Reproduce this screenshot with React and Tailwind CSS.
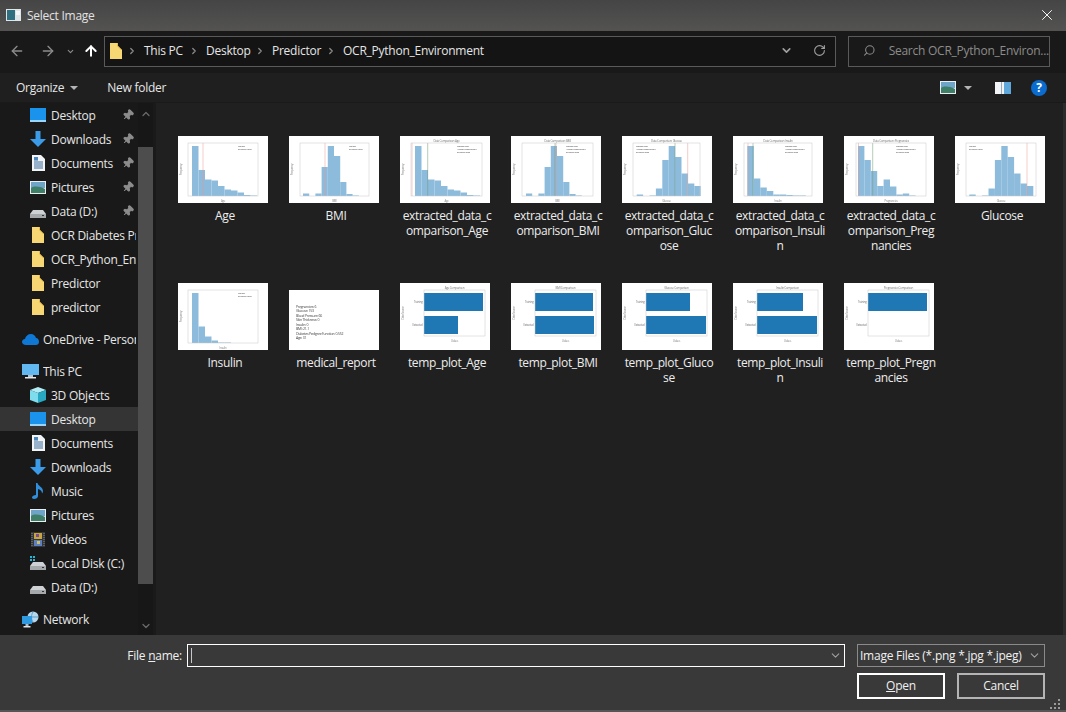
import React from 'react';
import { ArrowLeft, ArrowRight, ArrowUp, ChevronDown, ChevronRight, ChevronUp, RotateCw, Search, Pin, X } from 'lucide-react';

const FolderIcon = ({ className = '' }) => (
  <svg width="14" height="18" viewBox="0 0 14 18" className={className}>
    <path d="M1 1h7l1 2 0 0v1l4 4v9H1z" fill="#f7d774" />
    <path d="M8 1l1 0v3l4 4h-1L8 4z" fill="#e8b93f" />
  </svg>
);

const DesktopIcon = () => (
  <svg width="16" height="14" viewBox="0 0 16 14">
    <rect x="0" y="0" width="16" height="12" fill="#1a93ec" />
    <rect x="0" y="12" width="16" height="2" fill="#9bd3fa" />
  </svg>
);

const DownloadIcon = () => (
  <svg width="16" height="16" viewBox="0 0 16 16">
    <path d="M5.5 0h5v8H16l-8 8-8-8h5.500z" fill="#3b9be8" />
  </svg>
);

const DocumentIcon = () => (
  <svg width="13" height="16" viewBox="0 0 13 16">
    <path d="M0 0h9l4 4v12H0z" fill="#f2f4f6" />
    <path d="M2 5h4M2 7h9M2 9h9M2 11h9M2 13h9" stroke="#3f6fa0" strokeWidth="1" />
    <rect x="2" y="2" width="4" height="3" fill="#4a86c0" />
  </svg>
);

const PicturesIcon = () => (
  <svg width="16" height="13" viewBox="0 0 16 13">
    <rect width="16" height="13" fill="#e8eef2" />
    <rect x="1" y="1" width="14" height="6" fill="#6ea4c8" />
    <path d="M1 7c3-2 8-2 14 1v4H1z" fill="#3f7f68" />
  </svg>
);

const DriveIcon = ({ dots = false }) => (
  <svg width="16" height="14" viewBox="0 0 16 14">
    {dots && <path d="M0 0h2v2H0zM3 0h2v2H3zM0 3h2v2H0zM3 3h2v2H3z" fill="#29b4d6" />}
    <path d="M3 6h10l3 4H0z" fill="#cfd2d4" />
    <rect y="10" width="16" height="4" fill="#a6a9ab" />
    <rect x="12" y="11" width="2" height="1" fill="#333" />
  </svg>
);

const CloudIcon = () => (
  <svg width="17" height="11" viewBox="0 0 17 11">
    <path d="M4 11C1.500 11 0 9.500 0 8s1-3 3-3c.5-3 3-5 6-5 2.500 0 4.500 2 5 4 2 0 3 2 3 4s-1.500 3-3 3z" fill="#0f78d4" />
  </svg>
);

const MonitorIcon = () => (
  <svg width="17" height="15" viewBox="0 0 17 15">
    <rect width="17" height="11" fill="#62b8f0" />
    <rect x="6" y="11" width="5" height="2" fill="#b8c4cc" />
    <rect x="3" y="13" width="11" height="1.500" fill="#e4e8ea" />
  </svg>
);

const CubeIcon = () => (
  <svg width="16" height="16" viewBox="0 0 16 16">
    <path d="M8 0l8 3-8 3-8-3z" fill="#b4ecf5" />
    <path d="M0 3l8 3v10l-8-3z" fill="#7fdcec" />
    <path d="M16 3l-8 3v10l8-3z" fill="#29a8c4" />
  </svg>
);

const MusicIcon = () => (
  <svg width="12" height="16" viewBox="0 0 12 16">
    <path d="M4 0h1.500c.5 3 5.500 4 5.500 8 0 1-.5 2-1 2.500.2-2.500-2-4-4-4.500V13c0 2-2 3-4 3-1.500 0-2-1-2-1.500C0 13 2 12 4 12z" fill="#2f8fdc" />
  </svg>
);

const VideoIcon = () => (
  <svg width="14" height="15" viewBox="0 0 14 15">
    <rect width="14" height="15" fill="#33363a" />
    <rect x="3" y="1" width="8" height="6" fill="#c9a63c" />
    <rect x="3" y="8" width="8" height="6" fill="#5d7fc0" />
    <path d="M5 2h3v3H5z" fill="#7a4a9e" />
    <path d="M6 9h3v3H6z" fill="#d0c060" />
    <path d="M1 1v13M13 1v13" stroke="#888" strokeWidth="1" strokeDasharray="1 1" />
  </svg>
);

const NetworkIcon = () => (
  <svg width="17" height="17" viewBox="0 0 17 17">
    <circle cx="11" cy="6" r="5.500" fill="#b6d8ef" />
    <path d="M6 6h10M11 1c-2 3-2 7 0 10" stroke="#5a9bc8" strokeWidth="1" fill="none" />
    <rect x="0" y="5" width="10" height="8" fill="#2f9ae0" />
    <rect x="3.500" y="13" width="3" height="2" fill="#a8c0d0" />
    <rect x="1.500" y="15" width="7" height="1.500" fill="#e0e6ea" />
  </svg>
);

const pinned = [
  { label: 'Desktop', icon: <DesktopIcon />, pin: true },
  { label: 'Downloads', icon: <DownloadIcon />, pin: true },
  { label: 'Documents', icon: <DocumentIcon />, pin: true },
  { label: 'Pictures', icon: <PicturesIcon />, pin: true },
  { label: 'Data (D:)', icon: <DriveIcon />, pin: true },
  { label: 'OCR Diabetes Prediction', icon: <FolderIcon /> },
  { label: 'OCR_Python_Environment', icon: <FolderIcon /> },
  { label: 'Predictor', icon: <FolderIcon /> },
  { label: 'predictor', icon: <FolderIcon /> },
];

const thisPc = [
  { label: '3D Objects', icon: <CubeIcon /> },
  { label: 'Desktop', icon: <DesktopIcon />, active: true },
  { label: 'Documents', icon: <DocumentIcon /> },
  { label: 'Downloads', icon: <DownloadIcon /> },
  { label: 'Music', icon: <MusicIcon /> },
  { label: 'Pictures', icon: <PicturesIcon /> },
  { label: 'Videos', icon: <VideoIcon /> },
  { label: 'Local Disk (C:)', icon: <DriveIcon dots /> },
  { label: 'Data (D:)', icon: <DriveIcon /> },
];

const NavRow = ({ item }) => (
  <div className={`relative flex h-6 items-center pl-[30px] ${item.active ? 'bg-[#343434]' : ''}`}>
    <span className="flex w-[21px] shrink-0 justify-center pr-[5px]">{item.icon}</span>
    <span className="w-[85px] overflow-hidden whitespace-nowrap text-[#e6e6e6]">{item.label}</span>
    {item.pin && (
      <Pin size={12} className="absolute left-[122px] top-[6px] rotate-45 fill-[#8c8c8c] text-[#8c8c8c]" />
    )}
  </div>
);

const TopRow = ({ icon, label, className = '' }) => (
  <div className={`flex h-6 items-center pl-[22px] ${className}`}>
    <span className="flex w-[21px] shrink-0 justify-center pr-[4px]">{icon}</span>
    <span className="w-[93px] overflow-hidden whitespace-nowrap text-[#e6e6e6]">{label}</span>
  </div>
);

// axes frame, ticks and small captions shared by both kinds of plot
const Frame = ({ x0, x1, top, bottom, title, xlabel, ylabel, children }) => (
  <>
    {children}
    <rect x={x0} y={top} width={x1 - x0} height={bottom - top} fill="none" stroke="#c8c8c8" strokeWidth="0.5" />
    {title && (
      <text x={(x0 + x1) / 2} y={top - 1.500} fontSize="3" textAnchor="middle" fill="#777">{title}</text>
    )}
    <text x={(x0 + x1) / 2} y={bottom + 6} fontSize="2.800" textAnchor="middle" fill="#888">{xlabel}</text>
    <text x="0" y="0" fontSize="2.800" textAnchor="middle" fill="#888" transform={`translate(4 ${(top + bottom) / 2}) rotate(-90)`}>{ylabel}</text>
  </>
);

const HistThumb = ({ bars, start, step = 6.4, x0, x1, lines = [], title, xlabel, legend = [], legendX }) => {
  const top = 7;
  const bottom = 60;
  return (
    <svg width="90" height="67" viewBox="0 0 90 67" className="bg-white blur-[0.3px]">
      <Frame x0={x0} x1={x1} top={top} bottom={bottom} title={title} xlabel={xlabel} ylabel="Frequency">
        {bars.map((h, i) => (
          <rect key={i} x={start + i * step} y={bottom - h * 50} width={step} height={h * 50} fill="#8dbbdc" />
        ))}
        {lines.map((l, i) => (
          <line key={i} x1={l.x} x2={l.x} y1={top} y2={bottom} stroke={l.color} strokeWidth="0.500" />
        ))}
      </Frame>
      {legend.map((t, i) => (
        <text key={t} x={legendX} y={10.500 + i * 3} fontSize="2.400" fill="#555">{t}</text>
      ))}
    </svg>
  );
};

const BarThumb = ({ name, train, extracted }) => (
  <svg width="90" height="67" viewBox="0 0 90 67" className="bg-white blur-[0.3px]">
    <Frame x0={24} x1={85} top={7} bottom={53} title={`${name} Comparison`} xlabel="Values" ylabel="Data Source">
      <rect x={24} y={10} width={train - 24} height={18} fill="#1f77b4" />
      {extracted > 24 && <rect x={24} y={33} width={extracted - 24} height={18} fill="#1f77b4" />}
    </Frame>
    <text x="22.500" y="20" fontSize="2.800" textAnchor="end" fill="#777">Training</text>
    <text x="22.500" y="43" fontSize="2.800" textAnchor="end" fill="#777">Extracted</text>
  </svg>
);

const ReportThumb = () => (
  <svg width="90" height="60" viewBox="0 0 90 60" className="bg-white blur-[0.3px]">
    {[
      'Pregnancies: 6',
      'Glucose: 153',
      'Blood Pressure: 66',
      'Skin Thickness: 0',
      'Insulin: 0',
      'BMI: 21.1',
      'Diabetes Pedigree Function: 0.552',
      'Age: 31',
    ].map((t, i) => (
      <text key={t} x="7" y={17.500 + i * 4.500} fontSize="3.500" fill="#444">{t}</text>
    ))}
  </svg>
);

const red = '#e89a90';
const green = '#6f9a78';
const trainLegend = ['Training Data', 'Average Training Data', 'Extracted Data'];
const plainLegend = ['Dataset', 'Extracted Value'];
const ageBars = [1, 0.52, 0.33, 0.31, 0.2, 0.13, 0.11, 0.07, 0.02, 0.01];
const bmiBars = [0.05, 0, 0.05, 0.58, 1, 0.8, 0.28, 0.04, 0.01];
const glucoseBars = [0.03, 0, 0.01, 0.15, 0.72, 1, 0.78, 0.45, 0.25, 0.2];
const insulinBars = [1, 0.35, 0.17, 0.1, 0.03, 0.03, 0.02, 0.01, 0.01];

const files = [
  { name: 'Age', thumb: <HistThumb bars={ageBars} start={14} step={6.5} x0={10} x1={80} lines={[{ x: 25, color: red }]} xlabel="Age" legend={plainLegend} legendX={60} /> },
  { name: 'BMI', thumb: <HistThumb bars={bmiBars} start={14} step={6.200} x0={11} x1={80} lines={[{ x: 36, color: red }]} xlabel="BMI" legend={plainLegend} legendX={60} /> },
  { name: 'extracted_data_c\nomparison_Age', thumb: <HistThumb bars={ageBars} start={15} step={6.5} x0={11} x1={82} lines={[{ x: 12, color: red }, { x: 27.700, color: green }]} title="Data Comparison: Age" xlabel="Age" legend={trainLegend} legendX={57} /> },
  { name: 'extracted_data_c\nomparison_BMI', thumb: <HistThumb bars={bmiBars} start={15} step={6.200} x0={11} x1={82} lines={[{ x: 44, color: green }, { x: 45, color: red }]} title="Data Comparison: BMI" xlabel="BMI" legend={trainLegend} legendX={55} /> },
  { name: 'extracted_data_c\nomparison_Gluc\nose', thumb: <HistThumb bars={glucoseBars} start={14.700} x0={11} x1={78} lines={[{ x: 53, color: green }, { x: 65.700, color: red }]} title="Data Comparison: Glucose" xlabel="Glucose" legend={trainLegend} legendX={14} /> },
  { name: 'extracted_data_c\nomparison_Insuli\nn', thumb: <HistThumb bars={insulinBars} start={14.300} step={6.5} x0={11} x1={79} lines={[{ x: 15, color: red }, { x: 20, color: green }]} title="Data Comparison: Insulin" xlabel="Insulin" legend={trainLegend} legendX={52} /> },
  { name: 'extracted_data_c\nomparison_Preg\nnancies', thumb: <HistThumb bars={[1, 0.72, 0.5, 0.2, 0.33, 0.19, 0.03, 0.05, 0.01]} start={14} x0={12} x1={82} lines={[{ x: 14.500, color: red }, { x: 28.700, color: green }]} title="Data Comparison: Pregnancies" xlabel="Pregnancies" legend={trainLegend} legendX={52} /> },
  { name: 'Glucose', thumb: <HistThumb bars={glucoseBars} start={14.300} x0={11} x1={81} lines={[{ x: 72, color: red }]} xlabel="Glucose" legend={plainLegend} legendX={14} /> },
  { name: 'Insulin', thumb: <HistThumb bars={[1, 0.33, 0.13, 0.05, 0.01, 0.01]} start={14} step={6.5} x0={10} x1={80} lines={[]} xlabel="Insulin" legend={plainLegend} legendX={60} /> },
  { name: 'medical_report', thumb: <ReportThumb /> },
  { name: 'temp_plot_Age', thumb: <BarThumb name="Age" train={83} extracted={58} /> },
  { name: 'temp_plot_BMI', thumb: <BarThumb name="BMI" train={82} extracted={83} /> },
  { name: 'temp_plot_Gluco\nse', thumb: <BarThumb name="Glucose" train={68} extracted={84} /> },
  { name: 'temp_plot_Insuli\nn', thumb: <BarThumb name="Insulin" train={70} extracted={84} /> },
  { name: 'temp_plot_Pregn\nancies', thumb: <BarThumb name="Pregnancies" train={83} extracted={0} /> },
];

const Crumb = ({ children, w }) => (
  <span className="flex items-center">
    <ChevronRight size={10} strokeWidth={3} className="mr-[7px] text-[#8a8a8a]" />
    <span className={`${w} whitespace-nowrap text-[#e6e6e6]`}>{children}</span>
  </span>
);

export default function App() {
  return (
    <div className="flex h-[712px] w-[1066px] flex-col overflow-hidden bg-[#202020] text-[12px] leading-[15px] tracking-[-0.25px] text-white [font-family:'Open_Sans',sans-serif]">
      {/* title bar */}
      <div className="flex h-[31px] shrink-0 items-center bg-gradient-to-b from-[#454545] to-[#545352] pb-[1px] pl-[6px] pr-[10px]">
        <svg width="15" height="12" viewBox="0 0 15 12" className="mr-[6px]">
          <rect width="15" height="12" fill="#dfe6ea" />
          <rect x="1" y="1" width="8" height="10" fill="#2f6f7f" />
          <rect x="10" y="2" width="4" height="4" fill="#f4f6f7" />
        </svg>
        <span className="flex-1 text-[#e2e2e2]">Select Image</span>
        <X size={18} strokeWidth={1.25} className="text-white" />
      </div>

      {/* address row */}
      <div className="flex h-[42px] shrink-0 items-start bg-[#191919] pt-[5px]">
        <div className="flex h-[30px] w-[104px] shrink-0 items-center pl-[9px]">
          <ArrowLeft size={16} className="text-[#8c8c8c]" />
          <ArrowRight size={16} className="ml-[15px] text-[#8c8c8c]" />
          <ChevronDown size={9} strokeWidth={3} className="ml-[10px] text-[#8c8c8c]" />
          <ArrowUp size={16} strokeWidth={3} className="ml-[8px] text-white" />
        </div>
        <div className="flex h-[31px] w-[732px] shrink-0 items-center border border-[#5a5a5a] bg-[#141414] pb-[2px] pl-[4px]">
          <FolderIcon />
          <span className="flex pl-[4px]">
            <Crumb w="w-[45px]">This PC</Crumb>
            <Crumb w="w-[49px]">Desktop</Crumb>
            <Crumb w="w-[54px]">Predictor</Crumb>
            <Crumb w="w-[140px]">OCR_Python_Environment</Crumb>
          </span>
          <span className="flex-1" />
          <ChevronDown size={13} strokeWidth={3} className="mr-[20px] text-[#a0a0a0]" />
          <RotateCw size={13} strokeWidth={2} className="mr-[9px] text-[#a0a0a0]" />
        </div>
        <div className="ml-[12px] flex h-[31px] w-[202px] shrink-0 items-center border border-[#5a5a5a] bg-[#191919] pb-[2px] pl-[14px]">
          <Search size={13} className="-scale-x-100 text-[#8c8c8c]" />
          <span className="ml-[13px] whitespace-nowrap text-[#8c8c8c]">Search OCR_Python_Environ...</span>
        </div>
      </div>

      {/* command bar */}
      <div className="flex h-[30px] shrink-0 items-center border-b border-[#1a1a1a] bg-[#1f1f1f] pl-[16px]">
        <span className="text-[#e6e6e6]">Organize</span>
        <span className="ml-[6px] h-0 w-0 border-x-[4px] border-t-[4px] border-x-transparent border-t-[#b4b4b4]" />
        <span className="ml-[29px] flex-1 text-[#e6e6e6]">New folder</span>
        <PicturesIcon />
        <span className="ml-[8px] h-0 w-0 border-x-[4px] border-t-[4px] border-x-transparent border-t-[#b4b4b4]" />
        <svg width="16" height="12" viewBox="0 0 16 12" className="ml-[23px]">
          <rect width="16" height="12" fill="#f2f4f6" />
          <rect x="9" width="7" height="12" fill="#5fa8dc" />
          <rect x="6" width="1" height="12" fill="#9ab" />
        </svg>
        <span className="ml-[20px] mr-[19px] flex h-4 w-4 items-center justify-center rounded-full bg-[#0a6ccf] text-[12px] font-bold text-white">?</span>
      </div>

      {/* sidebar + file grid */}
      <div className="flex min-h-0 flex-1">
        <div className="relative flex w-[153px] shrink-0 bg-[#191919]">
          <div className="w-[138px] shrink-0">
            {pinned.map((item, i) => <NavRow key={i} item={item} />)}
            <TopRow icon={<CloudIcon />} label="OneDrive - Personal" className="mt-2" />
            <TopRow icon={<MonitorIcon />} label="This PC" className="mt-2" />
            {thisPc.map((item, i) => <NavRow key={i} item={item} />)}
            <TopRow icon={<NetworkIcon />} label="Network" className="mt-2" />
          </div>
          <div className="flex w-[15px] flex-col bg-[#171717]">
            <ChevronUp size={12} strokeWidth={2.5} className="ml-[2px] mt-[5px] text-[#6a6a6a]" />
            <div className="mt-[27px] h-[437px] w-[15px] bg-[#4d4d4d]" />
            <ChevronDown size={12} strokeWidth={2.5} className="ml-[2px] mt-[36px] text-[#6a6a6a]" />
          </div>
        </div>
        <div className="min-w-0 flex-1 border-l-[3px] border-[#1a1a1a] pl-[19px] pt-[33px]">
          <div className="grid w-[888px] grid-cols-[repeat(8,111px)] auto-rows-[147px]">
            {files.map((f) => (
              <div key={f.name} className="ml-[3px] w-[90px]">
                <div className="flex h-[67px] items-end">{f.thumb}</div>
                <div className="ml-[-3px] mt-[5px] w-[100px] whitespace-pre-line text-center tracking-[-0.35px] text-[#ededed]">{f.name}</div>
              </div>
            ))}
          </div>
        </div>
        <div className="w-[3px] shrink-0 bg-[#2c2c2c]" />
      </div>

      {/* file name + buttons */}
      <div className="relative h-[77px] shrink-0 border-b-2 border-[#555] bg-[#393939]">
        <div className="flex pt-[9px]">
          <span className="flex h-[23px] w-[187px] shrink-0 items-center justify-end pr-[5px] text-[#f0f0f0]">
            File&nbsp;<u>n</u>ame:
          </span>
          <div className="flex h-[23px] w-[658px] shrink-0 items-center border border-white pl-[3px]">
            <span className="h-[15px] w-px bg-[#c8c8c8]" />
            <span className="flex-1" />
            <ChevronDown size={13} className="mr-[2px] text-[#a0a0a0]" />
          </div>
          <div className="ml-[12px] flex h-[23px] w-[188px] shrink-0 items-center justify-between border border-[#8a8a8a] pl-[2px] pr-[3px] text-[#f0f0f0]">
            <span className="whitespace-nowrap">Image Files (*.png *.jpg *.jpeg)</span>
            <ChevronDown size={13} className="text-[#a0a0a0]" />
          </div>
        </div>
        <div className="flex pl-[857px] pt-[6px]">
          <button className="h-[26px] w-[88px] border-2 border-white pb-px text-[#f0f0f0]"><u>O</u>pen</button>
          <button className="ml-[12px] h-[26px] w-[88px] border-2 border-[#b4b4b4] pb-px text-[#f0f0f0]">Cancel</button>
        </div>
        <svg width="10" height="10" viewBox="0 0 10 10" className="absolute bottom-[1px] right-[6px]">
          <path d="M8 0h2v2H8zM4 4h2v2H4zM8 4h2v2H8zM0 8h2v2H0zM4 8h2v2H4zM8 8h2v2H8z" fill="#9a9a9a" />
        </svg>
      </div>
    </div>
  );
}
